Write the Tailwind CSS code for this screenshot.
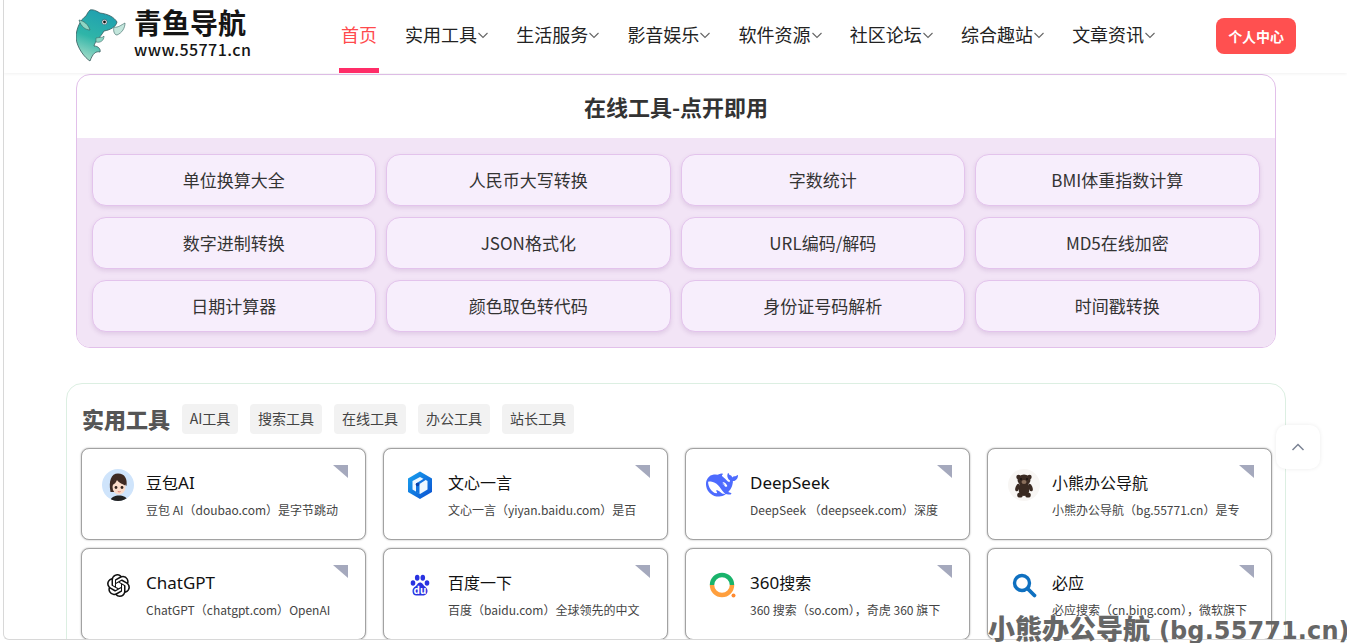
<!DOCTYPE html>
<html lang="zh-CN">
<head>
<meta charset="utf-8">
<title>青鱼导航</title>
<script src="https://cdn.jsdelivr.net/npm/@tailwindcss/browser@4"></script>
</head>
<body class="bg-white overflow-hidden font-['Noto_Sans_CJK_SC','Noto_Sans',sans-serif]">
<div class="relative w-[1347px] h-[643px] overflow-hidden bg-white">
  <div class="ml-[3px] h-[640px] overflow-hidden border-l border-b border-[#d8d8d8] rounded-bl-md">
    <header class="flex items-center h-[73px] pl-[72px] bg-white shadow-[0_1px_3px_rgba(0,0,0,0.06)] relative z-10">
      <a class="flex items-start w-[176px] h-[73px] pt-2 shrink-0">
        <svg class="w-[50px] h-[54px] shrink-0" viewBox="0 0 50 54">
          <defs><linearGradient id="fg" x1="0.6" y1="0" x2="0.3" y2="1"><stop offset="0" stop-color="#1f9fb0"/><stop offset="0.55" stop-color="#2fb5a8"/><stop offset="1" stop-color="#a5dcc8"/></linearGradient></defs>
          <path d="M14 2C18 1 22 4 24 5C32 6 38 9 41 14C40 19 34 22 28 23C24 30 19 33 18 38C22 38 25 41 24 44C20 43 17 45 14 53C9 50 1 40 0 30C0 20 5 11 10 8C11 6 12 4 14 2Z" fill="url(#fg)" stroke="#34595c" stroke-width="0.8"/>
          <path d="M3 12C8 13 12 16 14 22C10 22 5 19 3 12Z" fill="#8ed6c4" stroke="#3c6b68" stroke-width="0.7"/>
          <path d="M38 19C42 20 45 17 49 15C49 20 46 25 41 27C38 27 37 22 38 19Z" fill="#c3e6dc" stroke="#4c7672" stroke-width="0.7"/>
          <path d="M20 30C24 29 27 30 28 28C28 33 24 35 20 34Z" fill="#8ed6c4" stroke="#3c6b68" stroke-width="0.6"/>
          <circle cx="28.500" cy="14" r="2.600" fill="#fff" stroke="#234" stroke-width="0.5"/>
          <circle cx="28.500" cy="14" r="1.400" fill="#111"/>
        </svg>
        <div class="flex flex-col ml-[8px] -mt-[2px] text-[#151515] shrink-0">
          <span class="text-[28px] leading-[32px] font-bold whitespace-nowrap">青鱼导航</span>
          <span class="text-[16px] leading-[20px] font-medium mt-[1px] whitespace-nowrap tracking-[0.45px]">www.55771.cn</span>
        </div>
      </a>
      <nav class="flex items-center h-[73px] ml-[87px] text-[18px] text-[#222] whitespace-nowrap">
        <a class="relative flex items-center justify-center w-10 h-[73px] pb-1 mr-[26px] text-[#ff4a4d]">首页<span class="absolute left-0 bottom-0 w-10 h-[5px] bg-[#ff2d68]"></span></a>
        <div class="flex items-center gap-[27.2px] pb-1">
          <a class="flex items-center">实用工具<svg class="w-3 h-3" viewBox="0 0 12 12" fill="none" stroke="#666" stroke-width="1.100"><path d="M1.500 4 6 8.500 10.500 4"/></svg></a>
          <a class="flex items-center">生活服务<svg class="w-3 h-3" viewBox="0 0 12 12" fill="none" stroke="#666" stroke-width="1.100"><path d="M1.500 4 6 8.500 10.500 4"/></svg></a>
          <a class="flex items-center">影音娱乐<svg class="w-3 h-3" viewBox="0 0 12 12" fill="none" stroke="#666" stroke-width="1.100"><path d="M1.500 4 6 8.500 10.500 4"/></svg></a>
          <a class="flex items-center">软件资源<svg class="w-3 h-3" viewBox="0 0 12 12" fill="none" stroke="#666" stroke-width="1.100"><path d="M1.500 4 6 8.500 10.500 4"/></svg></a>
          <a class="flex items-center">社区论坛<svg class="w-3 h-3" viewBox="0 0 12 12" fill="none" stroke="#666" stroke-width="1.100"><path d="M1.500 4 6 8.500 10.500 4"/></svg></a>
          <a class="flex items-center">综合趣站<svg class="w-3 h-3" viewBox="0 0 12 12" fill="none" stroke="#666" stroke-width="1.100"><path d="M1.500 4 6 8.500 10.500 4"/></svg></a>
          <a class="flex items-center">文章资讯<svg class="w-3 h-3" viewBox="0 0 12 12" fill="none" stroke="#666" stroke-width="1.100"><path d="M1.500 4 6 8.500 10.500 4"/></svg></a>
        </div>
      </nav>
      <a class="flex items-center justify-center w-20 h-9 ml-[60px] -mt-[1px] rounded-lg bg-[#ff5050] text-white text-[14px] font-bold whitespace-nowrap">个人中心</a>
    </header>

    <section class="w-[1200px] ml-[72px] mt-[1px] h-[274px] rounded-[14px] border border-[#e2c0ea] overflow-hidden bg-white">
      <h2 class="flex items-center justify-center h-[63px] text-[22px] font-bold text-[#333]">在线工具-点开即用</h2>
      <div class="grid grid-cols-4 grid-rows-[52px_52px_52px] gap-x-[10px] gap-y-[11px] pl-[14.6px] pr-[15.4px] pt-[16px] h-[209px] bg-[#f2e4f6] text-[17px] text-[#333]">
        <a class="flex items-center justify-center rounded-[14px] border border-[#e3c3ec] bg-[#f7eefc] shadow-[0_2px_4px_rgba(120,60,140,0.15)]">单位换算大全</a>
        <a class="flex items-center justify-center rounded-[14px] border border-[#e3c3ec] bg-[#f7eefc] shadow-[0_2px_4px_rgba(120,60,140,0.15)]">人民币大写转换</a>
        <a class="flex items-center justify-center rounded-[14px] border border-[#e3c3ec] bg-[#f7eefc] shadow-[0_2px_4px_rgba(120,60,140,0.15)]">字数统计</a>
        <a class="flex items-center justify-center rounded-[14px] border border-[#e3c3ec] bg-[#f7eefc] shadow-[0_2px_4px_rgba(120,60,140,0.15)]">BMI体重指数计算</a>
        <a class="flex items-center justify-center rounded-[14px] border border-[#e3c3ec] bg-[#f7eefc] shadow-[0_2px_4px_rgba(120,60,140,0.15)]">数字进制转换</a>
        <a class="flex items-center justify-center rounded-[14px] border border-[#e3c3ec] bg-[#f7eefc] shadow-[0_2px_4px_rgba(120,60,140,0.15)]">JSON格式化</a>
        <a class="flex items-center justify-center rounded-[14px] border border-[#e3c3ec] bg-[#f7eefc] shadow-[0_2px_4px_rgba(120,60,140,0.15)]">URL编码/解码</a>
        <a class="flex items-center justify-center rounded-[14px] border border-[#e3c3ec] bg-[#f7eefc] shadow-[0_2px_4px_rgba(120,60,140,0.15)]">MD5在线加密</a>
        <a class="flex items-center justify-center rounded-[14px] border border-[#e3c3ec] bg-[#f7eefc] shadow-[0_2px_4px_rgba(120,60,140,0.15)]">日期计算器</a>
        <a class="flex items-center justify-center rounded-[14px] border border-[#e3c3ec] bg-[#f7eefc] shadow-[0_2px_4px_rgba(120,60,140,0.15)]">颜色取色转代码</a>
        <a class="flex items-center justify-center rounded-[14px] border border-[#e3c3ec] bg-[#f7eefc] shadow-[0_2px_4px_rgba(120,60,140,0.15)]">身份证号码解析</a>
        <a class="flex items-center justify-center rounded-[14px] border border-[#e3c3ec] bg-[#f7eefc] shadow-[0_2px_4px_rgba(120,60,140,0.15)]">时间戳转换</a>
      </div>
    </section>

    <section class="w-[1220px] ml-[62px] mt-[35px] h-[300px] rounded-t-[16px] border border-[#dcefe2] pl-[14px] pt-[20px]">
      <div class="flex items-center h-[30px] whitespace-nowrap">
        <h2 class="w-[100px] pl-[1px] -mt-[1px] text-[22px] font-black text-[#555]">实用工具</h2>
        <div class="flex gap-3 text-[14px] text-[#444]">
          <a class="h-[30px] leading-[28px] w-[56px] ml-[1px] text-center rounded bg-[#f2f2f2]">AI工具</a>
          <a class="h-[30px] leading-[28px] px-2 rounded bg-[#f2f2f2]">搜索工具</a>
          <a class="h-[30px] leading-[28px] px-2 rounded bg-[#f2f2f2]">在线工具</a>
          <a class="h-[30px] leading-[28px] px-2 rounded bg-[#f2f2f2]">办公工具</a>
          <a class="h-[30px] leading-[28px] px-2 rounded bg-[#f2f2f2]">站长工具</a>
        </div>
      </div>
      <div class="grid grid-cols-[285px_285px_285px_285px] gap-x-[17px] gap-y-2 mt-[14px]">
        <a class="relative flex h-[92px] pl-5 pt-5 rounded-lg border border-[#a2a2a2] bg-white shadow-[0_0_2px_rgba(0,0,0,0.35)]">
          <span class="absolute top-4 right-[17px] w-[15px] h-[13px] bg-[#a5a9bd] [clip-path:polygon(0_0,100%_0,100%_100%)]"></span>
          <svg class="w-8 h-8 shrink-0" viewBox="0 0 32 32"><defs><clipPath id="av"><circle cx="16" cy="16" r="16"/></clipPath></defs><g clip-path="url(#av)"><rect width="32" height="32" fill="#cfe4fb"/><path d="M8.500 23C6.500 12 9 4.500 16 4.500C23 4.500 25.500 10 24.500 17L22 14L12 11C12 15 12 20 12.500 23Z" fill="#3f2a22"/><ellipse cx="17" cy="18" rx="6.500" ry="7.500" fill="#fbdcca"/><path d="M10.500 16C11 11 14 8 18 8.500C21 9 23.500 12 23.500 16.500C20 15 16 13 15 11C14 13 13 15 10.500 16Z" fill="#3f2a22"/><circle cx="14" cy="18.500" r="1.400" fill="#33221c"/><circle cx="20" cy="18.500" r="1.400" fill="#33221c"/><path d="M15.800 22.500q1.400 .8 2.800 0" stroke="#d9605c" stroke-width="0.800" fill="none"/><path d="M8 32c1-4 5-5.500 9-5.500s8 1.500 9 5.500z" fill="#222"/></g></svg>
          <div class="ml-3 whitespace-nowrap">
            <div class="h-[24px] leading-[24px] text-[16px] text-[#111] mt-[1px]">豆包<span class="font-['Noto_Sans'] text-[17px]">AI</span></div>
            <div class="mt-[6px] h-[20px] leading-[20px] text-[12px] text-[#444]">豆包 AI（doubao.com）是字节跳动</div>
          </div>
        </a>
        <a class="relative flex h-[92px] pl-5 pt-5 rounded-lg border border-[#a2a2a2] bg-white shadow-[0_0_2px_rgba(0,0,0,0.35)]">
          <span class="absolute top-4 right-[17px] w-[15px] h-[13px] bg-[#a5a9bd] [clip-path:polygon(0_0,100%_0,100%_100%)]"></span>
          <svg class="w-8 h-8 shrink-0" viewBox="0 0 32 32"><defs><linearGradient id="wx" x1="0" y1="0" x2="1" y2="1"><stop offset="0" stop-color="#19a4f0"/><stop offset="1" stop-color="#0a4fd0"/></linearGradient></defs><path d="M16 2.500 28 9.500V23L16 30 4 23V9.500Z" fill="url(#wx)"/><path d="M16 8 23.500 12V20.500L16 25 8.500 20.500V12Z" fill="#eef7ff"/><path d="M12 14.500 20 9.500 22 10.800 15.500 15V25L12 23Z" fill="#1173e0"/><circle cx="13.500" cy="15.500" r="1.800" fill="#0b3fa8"/></svg>
          <div class="ml-3 whitespace-nowrap">
            <div class="h-[24px] leading-[24px] text-[16px] text-[#111] mt-[1px]">文心一言</div>
            <div class="mt-[6px] h-[20px] leading-[20px] text-[12px] text-[#444]">文心一言（yiyan.baidu.com）是百</div>
          </div>
        </a>
        <a class="relative flex h-[92px] pl-5 pt-5 rounded-lg border border-[#a2a2a2] bg-white shadow-[0_0_2px_rgba(0,0,0,0.35)]">
          <span class="absolute top-4 right-[17px] w-[15px] h-[13px] bg-[#a5a9bd] [clip-path:polygon(0_0,100%_0,100%_100%)]"></span>
          <svg class="w-8 h-8 shrink-0" viewBox="0 0 24 24" fill="#4d6bfe"><path d="M23.748 4.482c-.254-.124-.364.113-.512.234-.051.039-.094.09-.137.136-.372.397-.806.657-1.373.626-.829-.046-1.537.214-2.163.848-.133-.782-.575-1.248-1.247-1.548-.352-.156-.708-.311-.955-.65-.172-.241-.219-.51-.305-.774-.055-.16-.11-.323-.293-.35-.2-.031-.278.136-.356.276-.313.572-.434 1.202-.422 1.84.027 1.436.633 2.58 1.838 3.393.137.093.172.187.129.323-.082.28-.18.552-.266.833-.055.179-.137.217-.329.14a5.526 5.526 0 01-1.736-1.18c-.857-.828-1.631-1.742-2.597-2.458a11.365 11.365 0 00-.689-.471c-.985-.957.13-1.743.388-1.836.27-.098.093-.432-.779-.428-.872.004-1.67.295-2.687.684a3.055 3.055 0 01-.465.137 9.597 9.597 0 00-2.883-.102c-1.885.21-3.39 1.102-4.497 2.623C.082 8.606-.231 10.684.152 12.85c.403 2.284 1.569 4.175 3.36 5.653 1.858 1.533 3.997 2.284 6.438 2.14 1.482-.085 3.133-.284 4.994-1.86.47.234.962.327 1.78.397.63.059 1.236-.03 1.705-.128.735-.156.684-.837.419-.961-2.155-1.004-1.682-.595-2.113-.926 1.096-1.296 2.746-2.642 3.392-7.003.05-.347.007-.565 0-.845-.004-.17.035-.237.23-.256a4.173 4.173 0 001.545-.475c1.396-.763 1.96-2.015 2.093-3.517.02-.23-.004-.467-.247-.588zM11.581 18c-2.089-1.642-3.102-2.183-3.52-2.16-.392.024-.321.471-.235.763.09.288.207.486.371.739.114.167.192.416-.113.603-.673.416-1.842-.14-1.897-.167-1.361-.802-2.5-1.86-3.301-3.307-.774-1.393-1.224-2.887-1.298-4.482-.02-.386.093-.522.477-.592a4.696 4.696 0 011.529-.039c2.132.312 3.946 1.265 5.468 2.774.868.86 1.525 1.887 2.202 2.891.72 1.066 1.494 2.082 2.48 2.914.348.292.625.514.891.677-.802.09-2.14.11-3.054-.614zm1-6.44a.306.306 0 01.415-.287.302.302 0 01.2.288.306.306 0 01-.31.307.303.303 0 01-.304-.308zm3.11 1.596c-.2.081-.399.151-.59.16a1.245 1.245 0 01-.798-.254c-.274-.23-.47-.358-.552-.758a1.73 1.73 0 01.016-.588c.07-.327-.008-.537-.239-.727-.187-.156-.426-.199-.688-.199a.559.559 0 01-.254-.078c-.11-.054-.2-.19-.114-.358.028-.054.16-.186.192-.21.356-.202.767-.136 1.146.016.352.144.618.408 1.001.782.391.451.462.576.685.914.176.265.336.537.445.848.067.195-.019.354-.25.452z"/></svg>
          <div class="ml-3 whitespace-nowrap">
            <div class="h-[24px] leading-[24px] font-['Noto_Sans'] text-[17px] text-[#111] mt-[2px]">DeepSeek</div>
            <div class="mt-[5px] h-[20px] leading-[20px] text-[12px] text-[#444]">DeepSeek （deepseek.com）深度</div>
          </div>
        </a>
        <a class="relative flex h-[92px] pl-5 pt-5 rounded-lg border border-[#a2a2a2] bg-white shadow-[0_0_2px_rgba(0,0,0,0.35)]">
          <span class="absolute top-4 right-[17px] w-[15px] h-[13px] bg-[#a5a9bd] [clip-path:polygon(0_0,100%_0,100%_100%)]"></span>
          <svg class="w-8 h-8 shrink-0" viewBox="0 0 32 32"><circle cx="16" cy="16" r="16" fill="#f8f6f4"/><g fill="#3a2a22"><circle cx="10.500" cy="8" r="2.200"/><circle cx="21.500" cy="8" r="2.200"/><ellipse cx="16" cy="11" rx="6.500" ry="5.500"/><ellipse cx="16" cy="20" rx="5.500" ry="7"/><ellipse cx="9.500" cy="18.500" rx="1.900" ry="4" transform="rotate(20 9.500 18.500)"/><ellipse cx="22.500" cy="18.500" rx="1.900" ry="4" transform="rotate(-20 22.500 18.500)"/><ellipse cx="12" cy="26" rx="2.800" ry="2.600"/><ellipse cx="20" cy="26" rx="2.800" ry="2.600"/></g><ellipse cx="16" cy="13" rx="2.500" ry="2" fill="#8a6f5c"/><circle cx="13" cy="10" r="0.800" fill="#000"/><circle cx="19" cy="10" r="0.800" fill="#000"/></svg>
          <div class="ml-3 whitespace-nowrap">
            <div class="h-[24px] leading-[24px] text-[16px] text-[#111] mt-[1px]">小熊办公导航</div>
            <div class="mt-[6px] h-[20px] leading-[20px] text-[12px] text-[#444]">小熊办公导航（bg.55771.cn）是专</div>
          </div>
        </a>
        <a class="relative flex h-[92px] pl-5 pt-5 rounded-lg border border-[#a2a2a2] bg-white shadow-[0_0_2px_rgba(0,0,0,0.35)]">
          <span class="absolute top-4 right-[17px] w-[15px] h-[13px] bg-[#a5a9bd] [clip-path:polygon(0_0,100%_0,100%_100%)]"></span>
          <span class="flex items-center justify-center w-8 h-8 shrink-0"><svg class="w-[23px] h-[23px]" viewBox="0 0 24 24" fill="#111"><path d="M22.2819 9.8211a5.9847 5.9847 0 0 0-.5157-4.9108 6.0462 6.0462 0 0 0-6.5098-2.9A6.0651 6.0651 0 0 0 4.9807 4.1818a5.9847 5.9847 0 0 0-3.9977 2.9 6.0462 6.0462 0 0 0 .7427 7.0966 5.98 5.98 0 0 0 .511 4.9107 6.051 6.051 0 0 0 6.5146 2.9001A5.9847 5.9847 0 0 0 13.2599 24a6.0557 6.0557 0 0 0 5.7718-4.2058 5.9894 5.9894 0 0 0 3.9977-2.9001 6.0557 6.0557 0 0 0-.7475-7.0729zm-9.022 12.6081a4.4755 4.4755 0 0 1-2.8764-1.0408l.1419-.0804 4.7783-2.7582a.7948.7948 0 0 0 .3927-.6813v-6.7369l2.02 1.1686a.071.071 0 0 1 .038.052v5.5826a4.504 4.504 0 0 1-4.4945 4.4944zm-9.6607-4.1254a4.4708 4.4708 0 0 1-.5346-3.0137l.142.0852 4.783 2.7582a.7712.7712 0 0 0 .7806 0l5.8428-3.3685v2.3324a.0804.0804 0 0 1-.0332.0615L9.74 19.9502a4.4992 4.4992 0 0 1-6.1408-1.6464zM2.3408 7.8956a4.485 4.485 0 0 1 2.3655-1.9728V11.6a.7664.7664 0 0 0 .3879.6765l5.8144 3.3543-2.0201 1.1685a.0757.0757 0 0 1-.071 0l-4.8303-2.7865A4.504 4.504 0 0 1 2.3408 7.872zm16.5963 3.8558L13.1038 8.364 15.1192 7.2a.0757.0757 0 0 1 .071 0l4.8303 2.7913a4.4944 4.4944 0 0 1-.6765 8.1042v-5.6772a.79.79 0 0 0-.407-.667zm2.0107-3.0231l-.142-.0852-4.7735-2.7818a.7759.7759 0 0 0-.7854 0L9.409 9.2297V6.8974a.0662.0662 0 0 1 .0284-.0615l4.8303-2.7866a4.4992 4.4992 0 0 1 6.6802 4.66zM8.3065 12.863l-2.02-1.1638a.0804.0804 0 0 1-.038-.0567V6.0742a4.4992 4.4992 0 0 1 7.3757-3.4537l-.142.0805L8.704 5.459a.7948.7948 0 0 0-.3927.6813zm1.0976-2.3654l2.602-1.4998 2.6069 1.4998v2.9994l-2.5974 1.4997-2.6067-1.4997Z"/></svg></span>
          <div class="ml-3 whitespace-nowrap">
            <div class="h-[24px] leading-[24px] font-['Noto_Sans'] text-[17px] text-[#111] mt-[2px]">ChatGPT</div>
            <div class="mt-[5px] h-[20px] leading-[20px] text-[12px] text-[#444]">ChatGPT（chatgpt.com）OpenAI</div>
          </div>
        </a>
        <a class="relative flex h-[92px] pl-5 pt-5 rounded-lg border border-[#a2a2a2] bg-white shadow-[0_0_2px_rgba(0,0,0,0.35)]">
          <span class="absolute top-4 right-[17px] w-[15px] h-[13px] bg-[#a5a9bd] [clip-path:polygon(0_0,100%_0,100%_100%)]"></span>
          <span class="relative flex items-center justify-center w-8 h-8 shrink-0">
            <svg class="w-5 h-[22px]" viewBox="0 0 20 22" fill="#2932e1"><ellipse cx="3" cy="9" rx="2.300" ry="2.800"/><ellipse cx="7.200" cy="3.800" rx="2.300" ry="3"/><ellipse cx="12.800" cy="3.800" rx="2.300" ry="3"/><ellipse cx="17" cy="9" rx="2.300" ry="2.800"/><path d="M10 8.500c2.500 0 3 2.500 5 4 2 1.500 2.500 3 2.500 4.500 0 3-2.500 4.500-4.500 4.500H6.500C4 21.500 2.500 20 2.500 17c0-2 1-3.500 2.800-4.500C7 11.500 7.500 8.500 10 8.500z"/></svg>
            <span class="absolute left-0 right-0 top-[15px] text-center text-[10px] leading-[11px] font-bold text-white">du</span>
          </span>
          <div class="ml-3 whitespace-nowrap">
            <div class="h-[24px] leading-[24px] text-[16px] text-[#111] mt-[1px]">百度一下</div>
            <div class="mt-[6px] h-[20px] leading-[20px] text-[12px] text-[#444]">百度（baidu.com）全球领先的中文</div>
          </div>
        </a>
        <a class="relative flex h-[92px] pl-5 pt-5 rounded-lg border border-[#a2a2a2] bg-white shadow-[0_0_2px_rgba(0,0,0,0.35)]">
          <span class="absolute top-4 right-[17px] w-[15px] h-[13px] bg-[#a5a9bd] [clip-path:polygon(0_0,100%_0,100%_100%)]"></span>
          <svg class="w-8 h-8 shrink-0" viewBox="0 0 32 32" fill="none"><path d="M6 16A10 10 0 0 1 26 16" stroke="#19b36b" stroke-width="4.500"/><path d="M6 16A10 10 0 0 0 26 16" stroke="#ff9f3d" stroke-width="4.500"/><circle cx="27.500" cy="26.500" r="2" fill="#ff8a30"/></svg>
          <div class="ml-3 whitespace-nowrap">
            <div class="h-[24px] leading-[24px] text-[16px] text-[#111] mt-[1px]"><span class="font-['Noto_Sans'] text-[17px]">360</span>搜索</div>
            <div class="mt-[6px] h-[20px] leading-[20px] text-[12px] text-[#444]">360 搜索（so.com），奇虎 360 旗下</div>
          </div>
        </a>
        <a class="relative flex h-[92px] pl-5 pt-5 rounded-lg border border-[#a2a2a2] bg-white shadow-[0_0_2px_rgba(0,0,0,0.35)]">
          <span class="absolute top-4 right-[17px] w-[15px] h-[13px] bg-[#a5a9bd] [clip-path:polygon(0_0,100%_0,100%_100%)]"></span>
          <svg class="w-8 h-8 shrink-0" viewBox="0 0 32 32" fill="none" stroke="#0f70c0" stroke-linecap="round"><circle cx="14" cy="14" r="7.500" stroke-width="3.400"/><path d="M20 20 26.500 26.500" stroke-width="3.800"/></svg>
          <div class="ml-3 whitespace-nowrap">
            <div class="h-[24px] leading-[24px] text-[16px] text-[#111] mt-[1px]">必应</div>
            <div class="mt-[6px] h-[20px] leading-[20px] text-[12px] text-[#444]">必应搜索（cn.bing.com），微软旗下</div>
          </div>
        </a>
      </div>
    </section>
  </div>

  <a class="absolute left-[1276px] top-[425px] flex items-center justify-center w-11 h-11 rounded-[10px] bg-white shadow-[0_0_4px_rgba(0,0,0,0.08)]">
    <svg class="w-4 h-4" viewBox="0 0 16 16" fill="none" stroke="#7b8394" stroke-width="1.500"><path d="M2.500 11 8 5.500 13.500 11"/></svg>
  </a>
  <div class="absolute left-[988px] top-[610px] flex items-baseline h-9 leading-[36px] font-bold text-[#666] whitespace-nowrap">
    <span class="text-[27px] font-black">小熊办公导航</span><span class="ml-[9px] font-['DejaVu_Sans'] text-[24px] tracking-[0.1px]">(bg.55771.cn)</span>
  </div>
</div>
</body>
</html>
